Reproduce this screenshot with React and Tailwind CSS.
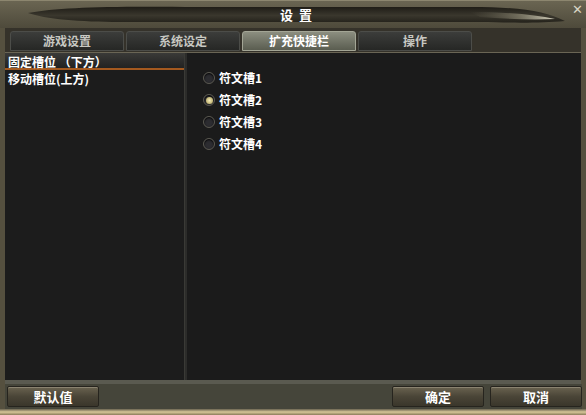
import { useState } from 'react'

const TABS = ['游戏设置', '系统设定', '扩充快捷栏', '操作']
const SLOTS = ['符文槽1', '符文槽2', '符文槽3', '符文槽4']

const font = { fontFamily: '"Noto Sans CJK SC", "DejaVu Sans", sans-serif' }

function Blade() {
  return (
    <svg className="absolute inset-0" width="586" height="28" viewBox="0 0 586 28">
      <defs>
        <linearGradient id="blade" x1="0" y1="0" x2="0" y2="1">
          <stop offset="0" stopColor="#1e1c16" />
          <stop offset="0.55" stopColor="#3a372d" />
          <stop offset="1" stopColor="#24221b" />
        </linearGradient>
        <linearGradient id="shine" x1="0" y1="0" x2="1" y2="0">
          <stop offset="0" stopColor="#6f6a58" stopOpacity="0" />
          <stop offset="0.6" stopColor="#9d9882" stopOpacity="0.6" />
          <stop offset="1" stopColor="#e8e4d0" stopOpacity="0.9" />
        </linearGradient>
      </defs>
      <path d="M28 12 C60 6 110 5 200 6 L470 6 C520 6 545 10 565 20 C540 22 520 22 480 21 L120 21 C80 21 45 18 28 12 Z" fill="url(#blade)" />
      <path d="M470 11 C510 11 535 14 555 18 C530 19 505 18 480 16 Z" fill="url(#shine)" />
    </svg>
  )
}

function Radio({ checked }) {
  return (
    <span className="w-[12px] h-[12px] rounded-full border border-[#5a5850] bg-[#2c2c30] flex items-center justify-center shadow-[inset_0_1px_2px_#000]">
      {checked && <span className="w-[7px] h-[7px] rounded-full bg-[radial-gradient(circle,#f6edb8,#a89a55)]" />}
    </span>
  )
}

function Btn({ children }) {
  return (
    <button className="w-[92px] h-[21px] rounded-[2px] border border-[#26241e] bg-gradient-to-b from-[#6a6350] via-[#4a4537] to-[#3a362b] shadow-[inset_0_1px_0_#8a8370] text-[13px] font-bold text-white">
      {children}
    </button>
  )
}

export default function App() {
  const [tab, setTab] = useState(2)
  const [slot, setSlot] = useState(1)
  const [list, setList] = useState(0)

  return (
    <div style={font} className="w-[586px] h-[415px] bg-[#55503f] flex flex-col overflow-hidden select-none">
      {/* Title */}
      <div className="relative h-[28px] shrink-0 bg-gradient-to-b from-[#6a6552] to-[#4e4a3b] border-t border-[#8c866f]">
        <Blade />
        <div className="relative h-full flex items-center justify-center text-[13px] font-bold text-white tracking-[6px] pl-[12px]">设置</div>
        <span className="absolute right-[3px] top-[1px] text-[13px] leading-none text-[#d8d4c4]">✕</span>
      </div>

      {/* Tabs */}
      <div className="h-[24px] shrink-0 mx-[5px] bg-[#35322a] flex items-end gap-[2px] pl-[5px] pb-[1px]">
        {TABS.map((t, i) => (
          <button
            key={t}
            onClick={() => setTab(i)}
            className={`w-[114px] h-[20px] rounded-t-[3px] border text-[12px] font-bold ${
              i === tab
                ? 'bg-gradient-to-b from-[#8c8e80] to-[#5a5d50] border-[#a3a595] text-white'
                : 'bg-gradient-to-b from-[#3c3d3b] to-[#262725] border-[#4c4d49] text-[#c8c8c2]'
            }`}
          >
            {t}
          </button>
        ))}
      </div>

      {/* Body */}
      <div className="flex-1 mx-[5px] border-t border-[#6a6555] flex bg-[#1b1b1b]">
        <div className="w-[180px] bg-[#1c1c1c] border-r border-[#3a3a36]">
          {['固定槽位 （下方）', '移动槽位(上方)'].map((t, i) => (
            <div
              key={t}
              onClick={() => setList(i)}
              className={`h-[17px] px-[3px] text-[12px] leading-[17px] font-bold text-white ${
                i === list ? 'bg-gradient-to-b from-[#3a3a38] to-[#222221] border-b-2 border-[#a4591f]' : ''
              }`}
            >
              {t}
            </div>
          ))}
        </div>
        <div className="w-[2px] bg-[#2c2c2a]" />
        <div className="flex-1 pt-[17px] pl-[16px] flex flex-col gap-[6px]">
          {SLOTS.map((s, i) => (
            <div key={s} onClick={() => setSlot(i)} className="h-[16px] flex items-center gap-[4px] text-[12px] font-bold text-white">
              <Radio checked={i === slot} />
              {s}
            </div>
          ))}
        </div>
      </div>

      {/* Footer */}
      <div className="h-[4px] mx-[5px] bg-[#5a5a50]" />
      <div className="h-[25px] shrink-0 ml-[5px] mr-[4px] bg-[#45453a] flex items-center pl-[2px]">
        <Btn>默认值</Btn>
        <div className="flex-1" />
        <div className="flex gap-[6px]">
          <Btn>确定</Btn>
          <Btn>取消</Btn>
        </div>
      </div>
      <div className="h-[6px] shrink-0 bg-gradient-to-b from-[#6a6350] via-[#d8c89a] to-[#8a7c5a]" />
    </div>
  )
}
